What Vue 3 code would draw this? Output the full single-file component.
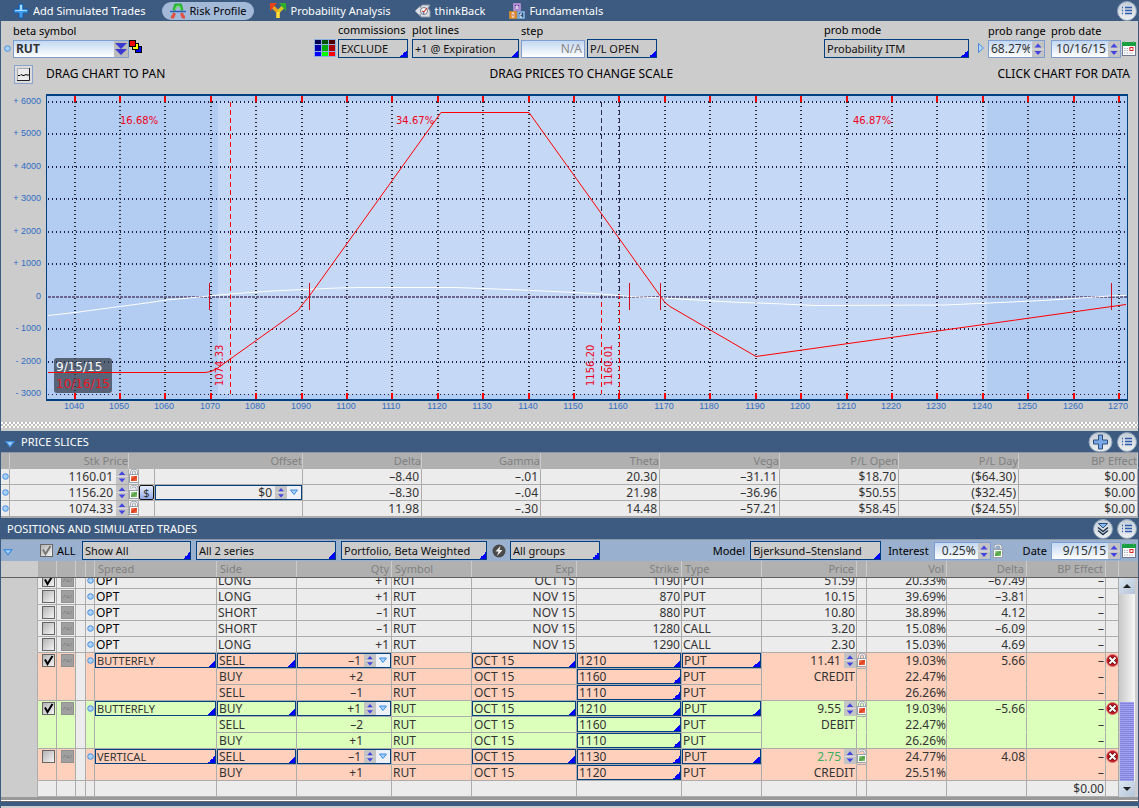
<script setup>
import { ref } from 'vue'

const tabs = [
  { icon: 'i-plus', label: 'Add Simulated Trades' },
  { icon: 'i-risk', label: 'Risk Profile', active: true },
  { icon: 'i-fork', label: 'Probability Analysis' },
  { icon: 'i-back', label: 'thinkBack' },
  { icon: 'i-abc', label: 'Fundamentals' }
]

const plotX = price => Math.floor(75 + (price - 1040) * 4.5412)
const plotY = value => Math.floor(297 - value * 0.0325)
const prices = Array.from({ length: 24 }, (_, i) => 1040 + i * 10)
const values = [6000, 5000, 4000, 3000, 2000, 1000, 0, -1000, -2000, -3000]
const valueLabel = v => (v > 0 ? '+ ' + v : v < 0 ? '- ' + -v : '0')
const breakEvens = [209, 309, 629, 660, 1111]
const zones = [
  { x: 120, text: '16.68%' },
  { x: 396, text: '34.67%' },
  { x: 853, text: '46.87%' }
]
const sliceMarks = [
  { x: 223, text: '1074.33' },
  { x: 594, text: '1156.20' },
  { x: 612, text: '1160.01' }
]

const sliceHeads = ['Delta', 'Gamma', 'Theta', 'Vega', 'P/L Open', 'P/L Day', 'BP Effect']
const slices = [
  { price: '1160.01', lock: 'i-lock', cells: ['–8.40', '–.01', '20.30', '–31.11', '$18.70', '($64.30)', '$0.00'] },
  { price: '1156.20', lock: 'i-unlock', offset: '$0', cells: ['–8.30', '–.04', '21.98', '–36.96', '$50.55', '($32.45)', '$0.00'] },
  { price: '1074.33', lock: 'i-lock', cells: ['11.98', '–.30', '14.48', '–57.21', '$58.45', '($24.55)', '$0.00'] }
]
const sliceCols = [9, 119, 10, 16, 148, 119, 119, 119, 120, 119, 120, 119]
const posCols = [37, 19, 19, 10, 9, 122, 80, 95, 80, 105, 105, 80, 95, 10, 80, 80, 79, 13]

const positions = ref([
  { on: true, side: 'LONG', qty: '+1', exp: 'OCT 15', strike: '1190', type: 'PUT', price: '51.59', vol: '20.33%', delta: '–67.49' },
  { on: false, side: 'LONG', qty: '+1', exp: 'NOV 15', strike: '870', type: 'PUT', price: '10.15', vol: '39.69%', delta: '–3.81' },
  { on: false, side: 'SHORT', qty: '–1', exp: 'NOV 15', strike: '880', type: 'PUT', price: '10.80', vol: '38.89%', delta: '4.12' },
  { on: false, side: 'SHORT', qty: '–1', exp: 'NOV 15', strike: '1280', type: 'CALL', price: '3.20', vol: '15.08%', delta: '–6.09' },
  { on: false, side: 'LONG', qty: '+1', exp: 'NOV 15', strike: '1290', type: 'CALL', price: '2.30', vol: '15.03%', delta: '4.69' }
])

const trades = ref([
  {
    on: true, tone: 'sell', spread: 'BUTTERFLY', price: '11.41', effect: 'CREDIT', lock: 'i-lock', delta: '5.66',
    legs: [
      { side: 'SELL', qty: '–1', strike: '1210', vol: '19.03%' },
      { side: 'BUY', qty: '+2', strike: '1160', vol: '22.47%' },
      { side: 'SELL', qty: '–1', strike: '1110', vol: '26.26%' }
    ]
  },
  {
    on: true, tone: 'buy', spread: 'BUTTERFLY', price: '9.55', effect: 'DEBIT', lock: 'i-lock', delta: '–5.66',
    legs: [
      { side: 'BUY', qty: '+1', strike: '1210', vol: '19.03%' },
      { side: 'SELL', qty: '–2', strike: '1160', vol: '22.47%' },
      { side: 'BUY', qty: '+1', strike: '1110', vol: '26.26%' }
    ]
  },
  {
    on: false, tone: 'sell', spread: 'VERTICAL', price: '2.75', live: true, effect: 'CREDIT', lock: 'i-unlock', delta: '4.08',
    legs: [
      { side: 'SELL', qty: '–1', strike: '1130', vol: '24.77%' },
      { side: 'BUY', qty: '+1', strike: '1120', vol: '25.51%' }
    ]
  }
])
</script>

<template>
  <div class="app">
    <svg class="sprites" aria-hidden="true">
      <defs>
        <linearGradient id="g-round" x1="0" y1="0" x2="0" y2="1">
          <stop offset="0" stop-color="#c3ccd6" /><stop offset="1" stop-color="#eef0f2" />
        </linearGradient>
        <linearGradient id="g-blue" x1="0" y1="0" x2="0" y2="1">
          <stop offset="0" stop-color="#8fd0ff" /><stop offset="1" stop-color="#2f8be0" />
        </linearGradient>
        <linearGradient id="g-red" x1="0" y1="0" x2="1" y2="1">
          <stop offset="0" stop-color="#f8a080" /><stop offset="0.5" stop-color="#e03a18" /><stop offset="1" stop-color="#f08060" />
        </linearGradient>
        <linearGradient id="g-green" x1="0" y1="0" x2="1" y2="1">
          <stop offset="0" stop-color="#b4dca8" /><stop offset="0.5" stop-color="#50a040" /><stop offset="1" stop-color="#90c880" />
        </linearGradient>
      </defs>
      <symbol id="i-plus" viewBox="0 0 16 16">
        <path d="M6 1h4v5h5v4h-5v5H6v-5H1V6h5z" fill="#3f9cec" stroke="#1c5ca8" />
        <path d="M7 2h2v5h5v1H9v0H2V7h5z" fill="#a4dcff" />
      </symbol>
      <symbol id="i-risk" viewBox="0 0 16 16">
        <path d="M4 7.500 5.500 2h5L12 7.500" fill="none" stroke="#27b431" stroke-width="3" stroke-linejoin="round" />
        <path d="M5 7 6.500 3h3L11 7" fill="none" stroke="#7be36c" stroke-width="1" />
        <path d="M1 14h2l1.500-4M15 14h-2l-1.500-4" fill="none" stroke="#e2503e" stroke-width="3" stroke-linejoin="round" />
        <path d="M0 8.500h16" stroke="#2a62b8" stroke-width="1.500" />
      </symbol>
      <symbol id="i-fork" viewBox="0 0 16 16">
        <path d="M8 15V9L3 4" fill="none" stroke="#f0a01c" stroke-width="3.500" />
        <path d="M8 9l5-5" fill="none" stroke="#d8c820" stroke-width="3.500" />
        <path d="M8 15V9" stroke="#ffe23c" stroke-width="3" />
        <path d="M0 0h7L0 8z" fill="#e8421c" />
        <path d="M16 0H9l7 8z" fill="#2cb02c" />
      </symbol>
      <symbol id="i-back" viewBox="0 0 16 16">
        <path d="M0 8l5-5v2l2-3h8l-2 3 2 3v6H6l-1-3v2z" fill="#dce0e6" stroke="#8c98a6" />
        <circle cx="9" cy="8" r="3.500" fill="#fff" stroke="#6b7684" />
        <path d="M7 8l2 1 3-4" fill="none" stroke="#d04030" stroke-width="1.200" />
        <path d="M8 9l1 2" stroke="#3a68b0" />
      </symbol>
      <symbol id="i-abc" viewBox="0 0 16 16">
        <g stroke-width="1.500">
          <rect x="5" y="1" width="6" height="6" fill="#5d2c93" stroke="#c9a0e8" />
          <rect x="1" y="9" width="6" height="6" fill="#b04008" stroke="#f09a20" />
          <rect x="9" y="9" width="6" height="6" fill="#28507c" stroke="#8cbce8" />
        </g>
        <path d="M7 6V3h2v3M7 5h2M3 14v-4h2v4zM13 11h-2v3h2" fill="none" stroke="#fff" />
      </symbol>
      <symbol id="i-round-list" viewBox="0 0 20 20">
        <circle cx="10" cy="10" r="9.500" fill="url(#g-round)" stroke="#8ea2ba" />
        <path d="M5 6.500h1M5 9.500h1M5 12.500h1M8 6.500h7M8 9.500h7M8 12.500h7" stroke="#2d5cb0" stroke-width="1.500" />
      </symbol>
      <symbol id="i-round-plus" viewBox="0 0 24 20">
        <rect x="0.500" y="0.500" width="23" height="19" rx="9.500" fill="url(#g-round)" stroke="#8ea2ba" />
        <path d="M10 3h4v5h5v4h-5v5h-4v-5H5V8h5z" fill="#7aa8e6" stroke="#2c5080" />
      </symbol>
      <symbol id="i-round-down" viewBox="0 0 20 20">
        <circle cx="10" cy="10" r="9.500" fill="url(#g-round)" stroke="#8ea2ba" />
        <path d="M5.500 4.500h9L10 9z" fill="#88b8f0" stroke="#28507c" />
        <path d="M5 8.500l5 4 5-4M5 11.500l5 4 5-4" fill="none" stroke="#1c3450" stroke-width="1.500" />
      </symbol>
      <symbol id="i-lock" viewBox="0 0 10 14">
        <path d="M2.500 7V3.500a2.500 2.500 0 0 1 5 0V7" fill="none" stroke="#8a94a0" stroke-width="2.600" />
        <path d="M2.500 7V3.500a2.500 2.500 0 0 1 5 0V7" fill="none" stroke="#f4f6f8" stroke-width="1.200" />
        <rect x="0.500" y="5.500" width="9" height="8" fill="#fff" stroke="#98a0aa" />
        <rect x="2" y="7" width="6" height="5" fill="url(#g-red)" />
      </symbol>
      <symbol id="i-unlock" viewBox="0 0 10 14">
        <path d="M2 3.500a3 2.500 0 0 1 6 0V6" fill="none" stroke="#8a94a0" stroke-width="2.400" />
        <path d="M2 3.500a3 2.500 0 0 1 6 0V6" fill="none" stroke="#f4f6f8" stroke-width="1.200" />
        <rect x="0.500" y="5.500" width="9" height="8" fill="#fff" stroke="#98a0aa" />
        <rect x="2" y="7" width="6" height="5" fill="url(#g-green)" />
      </symbol>
      <symbol id="i-spin" viewBox="0 0 12 16">
        <path d="M0 8h12" stroke="#dcdcdc" />
        <path d="M2.500 6.500 6 2.500l3.500 4z M2.500 10 6 14l3.500-4z" fill="#4444e0" />
      </symbol>
      <symbol id="i-tri" viewBox="0 0 8 6">
        <path d="M0.500 0.500h7L4 5z" fill="#a4d0fa" stroke="#3f8ce0" />
      </symbol>
      <symbol id="i-dot" viewBox="0 0 7 7">
        <circle cx="3.500" cy="3.500" r="2.800" fill="#a8d2fa" stroke="#4a8cdc" />
      </symbol>
      <symbol id="i-check" viewBox="0 0 13 13">
        <path d="M3 5.500l2.500 4.500L10.500 2" fill="none" stroke="currentColor" stroke-width="2" />
      </symbol>
      <symbol id="i-wave" viewBox="0 0 13 13">
        <rect x="0.500" y="0.500" width="12" height="12" fill="#a0a0a0" stroke="#909090" />
        <path d="M2 8l2-3 2 3 1-1V5M7 7l2 1 2-3" fill="none" stroke="#868686" />
      </symbol>
      <symbol id="i-cal" viewBox="0 0 14 15">
        <rect x="0.500" y="2.500" width="13" height="12" fill="#fff" stroke="#707890" />
        <path d="M0 1h14v4H0z" fill="#18a040" />
        <path d="M2.500 0v2M11.500 0v2" stroke="#60b878" />
        <path d="M2 7.500h6M2 9.500h5M2 12h9" stroke="#a8b0b8" stroke-dasharray="1.500 1" />
        <rect x="8" y="6.500" width="3" height="3" fill="none" stroke="#e02020" />
      </symbol>
      <symbol id="i-del" viewBox="0 0 13 13">
        <circle cx="6.500" cy="6.500" r="6" fill="#c01820" stroke="#e07070" />
        <path d="M3.500 3.500l6 6M9.500 3.500l-6 6" stroke="#501010" stroke-width="3.500" />
        <path d="M3.500 3.500l6 6M9.500 3.500l-6 6" stroke="#fff" stroke-width="2" />
      </symbol>
    </svg>

    <nav class="tabs">
      <button v-for="t in tabs" :key="t.label" type="button" class="tab" :class="{ active: t.active }">
        <svg class="ic16"><use :href="'#' + t.icon" /></svg>{{ t.label }}
      </button>
      <button type="button" class="round push" aria-label="Menu"><svg><use href="#i-round-list" /></svg></button>
    </nav>

    <section class="settings">
      <div class="fields">
        <svg class="dot"><use href="#i-dot" /></svg>
        <div class="field w-beta">
          <label for="beta">beta symbol</label>
          <span class="box grad">
            <input id="beta" class="strong" value="RUT">
            <button type="button" class="dbl" aria-label="Choose symbol">
              <svg viewBox="0 0 14 14"><path d="M1 1h12L7 7zM1 7h12l-6 6z" fill="#3a3ad0" /></svg>
            </button>
          </span>
        </div>
        <svg class="squares" viewBox="0 0 14 14" shape-rendering="crispEdges">
          <rect x="6.500" y="6.500" width="6" height="6" fill="#00f" stroke="#000" />
          <rect x="3.500" y="3.500" width="6" height="6" fill="#ff0" stroke="#000" />
          <rect x="0.500" y="0.500" width="6" height="6" fill="#f00" stroke="#000" />
        </svg>
        <svg class="palette" viewBox="0 0 22 18" shape-rendering="crispEdges">
          <rect width="22" height="18" fill="#8cb0e4" />
          <path d="M1 1h6v4H1z" fill="#000050" /><path d="M8 1h6v4H8z" fill="#005000" /><path d="M15 1h6v4h-6z" fill="#500000" />
          <path d="M1 6h6v6H1z" fill="#0000aa" /><path d="M8 6h6v6H8z" fill="#00aa00" /><path d="M15 6h6v6h-6z" fill="#aa0000" />
          <path d="M1 13h6v4H1z" fill="#00f" /><path d="M8 13h6v4H8z" fill="#0f0" /><path d="M15 13h6v4h-6z" fill="#f00" />
        </svg>
        <div class="field w-70">
          <label for="comm">commissions</label>
          <select id="comm" class="combo"><option>EXCLUDE</option></select>
        </div>
        <div class="field w-107">
          <label for="plot">plot lines</label>
          <select id="plot" class="combo"><option>+1 @ Expiration</option></select>
        </div>
        <div class="field w-64">
          <label for="step">step</label>
          <span class="box grad"><input id="step" class="right dim" value="N/A"></span>
        </div>
        <div class="field w-70">
          <select class="combo" aria-label="Plot value"><option>P/L OPEN</option></select>
        </div>
        <div class="field w-145 push">
          <label for="mode">prob mode</label>
          <select id="mode" class="combo"><option>Probability ITM</option></select>
        </div>
        <svg class="play" viewBox="0 0 8 12"><path d="M1.500 1.500v9L6.500 6z" fill="#b4d4fa" stroke="#4a8cdc" /></svg>
        <div class="field w-57">
          <label for="range">prob range</label>
          <span class="box grad"><input id="range" class="right" value="68.27%"><svg class="spin"><use href="#i-spin" /></svg></span>
        </div>
        <div class="field w-70">
          <label for="pdate">prob date</label>
          <span class="box grad"><input id="pdate" class="right" value="10/16/15"><svg class="spin"><use href="#i-spin" /></svg></span>
        </div>
        <svg class="cal"><use href="#i-cal" /></svg>
      </div>
      <div class="hints">
        <span class="hint">
          <svg class="chartico" viewBox="0 0 19 19">
            <rect x="0.500" y="0.500" width="18" height="18" fill="#dcdcdc" stroke="#88a4cc" />
            <path d="M3 3h12v12H3z" fill="#ececec" /><path d="M3.500 15V3.500H15" fill="none" stroke="#aaa" />
            <path d="M15.500 3v12.500H3" fill="none" stroke="#222" />
            <path d="M4 10.500h2l1-1 2 1h1l2-1 1 .5h2" fill="none" stroke="#000" />
          </svg>
          DRAG CHART TO PAN
        </span>
        <span>DRAG PRICES TO CHANGE SCALE</span>
        <span>CLICK CHART FOR DATA</span>
      </div>
    </section>

    <svg class="chart" viewBox="1 86 1137 336" role="img" aria-label="Risk profile chart">
      <g shape-rendering="crispEdges">
        <rect x="46" y="94" width="1082" height="307" fill="#004080" />
        <rect x="47" y="96" width="1080" height="303" fill="#b2ccf2" />
        <rect x="218" y="101" width="769" height="293" fill="#c5d8f5" />
        <path v-for="v in values" :key="v" :d="`M48 ${plotY(v)}H1127`" :class="v === 0 ? 'zero' : v === -3000 ? 'grid thin' : 'grid'" />
        <path v-for="p in prices" :key="p" :d="`M${plotX(p)} 102V394`" class="grid vert" />
        <path v-for="p in prices" :key="'t' + p" :d="`M${plotX(p)} 96v6M${plotX(p)} 393v6`" class="tick" />
        <path d="M230.500 102V394M601.500 302V394M619.500 294V394" class="slice" />
        <path d="M601.500 102V302M619.500 102V294" class="slice dark" />
      </g>
      <path class="now" d="M48 315.500 75 312.500 120 306.500 150 302.500 166 300 200 297 213 295.500 230 294 250 292.500 272 291 293 290 337 288 360 287.500 455 287.500 522 290 575 292.500 601 294 630 296.500 663 298 705 300.500 740 302.500 760 303 815 305.500 945 305 1000 302.500 1043 300.500 1080 298 1110 296 1126 295.500" />
      <path class="expiry" d="M48 372.500H205L211 371.500 217 368.500 298 310.500 302 305 309 296.500 441 112.500H529L661 297 665 302.500 670 306.500 756 356.500 1126 304.500" />
      <path v-for="b in breakEvens" :key="b" :d="`M${b + 0.5} 283V310`" class="even" />
      <rect x="54" y="358" width="58" height="35" rx="3" fill="#303844" fill-opacity="0.700" />
      <path d="M54 372.500h58" class="expiry" />
      <text x="56" y="371" class="legend">9/15/15</text>
      <text x="56" y="388" class="legend red">10/16/15</text>
      <text v-for="z in zones" :key="z.text" :x="z.x" y="124" class="mark">{{ z.text }}</text>
      <text v-for="s in sliceMarks" :key="s.text" class="mark" :transform="`translate(${s.x} 386) rotate(-90)`">{{ s.text }}</text>
      <text v-for="v in values" :key="'v' + v" x="41" :y="plotY(v) + 2" class="axis end">{{ valueLabel(v) }}</text>
      <text v-for="p in prices" :key="'p' + p" :x="plotX(p) - 1" y="409" class="axis mid">{{ p }}</text>
    </svg>
    <div class="splitter"></div>

    <header class="bar">
      <svg class="caret"><use href="#i-tri" /></svg>
      <h2>PRICE SLICES</h2>
      <button type="button" class="round wide push" aria-label="Add slice"><svg><use href="#i-round-plus" /></svg></button>
      <button type="button" class="round" aria-label="Menu"><svg><use href="#i-round-list" /></svg></button>
    </header>
    <table class="grid-table slices">
      <colgroup><col v-for="(w, i) in sliceCols" :key="i" :style="{ width: w + 'px' }"></colgroup>
      <thead>
        <tr>
          <th></th><th class="r">Stk Price</th><th colspan="3" class="r">Offset</th>
          <th v-for="h in sliceHeads" :key="h" class="r">{{ h }}</th>
        </tr>
      </thead>
      <tbody>
        <tr v-for="s in slices" :key="s.price">
          <td class="ctr"><svg class="dot"><use href="#i-dot" /></svg></td>
          <td><span class="spinbox"><input :value="s.price" aria-label="Stock price"><svg class="spin"><use href="#i-spin" /></svg></span></td>
          <td class="ctr"><svg class="lock"><use :href="'#' + s.lock" /></svg></td>
          <td class="ctr"><button v-if="s.offset" type="button" class="dollar">$</button></td>
          <td>
            <span v-if="s.offset" class="spinbox framed">
              <input :value="s.offset" aria-label="Offset"><svg class="spin"><use href="#i-spin" /></svg><svg class="drop"><use href="#i-tri" /></svg>
            </span>
          </td>
          <td v-for="(c, i) in s.cells" :key="i" class="r pad">{{ c }}</td>
        </tr>
      </tbody>
    </table>

    <header class="bar">
      <h2 class="flush">POSITIONS AND SIMULATED TRADES</h2>
      <button type="button" class="round push" aria-label="Expand"><svg><use href="#i-round-down" /></svg></button>
      <button type="button" class="round" aria-label="Menu"><svg><use href="#i-round-list" /></svg></button>
    </header>
    <div class="filters">
      <svg class="caret"><use href="#i-tri" /></svg>
      <label class="all"><span class="tick-wrap soft"><input type="checkbox" checked><svg><use href="#i-check" /></svg></span>ALL</label>
      <select class="combo w-109" aria-label="Show"><option>Show All</option></select>
      <select class="combo w-140" aria-label="Series"><option>All 2 series</option></select>
      <select class="combo w-146" aria-label="Weighting"><option>Portfolio, Beta Weighted</option></select>
      <svg class="bolt" viewBox="0 0 14 14"><circle cx="7" cy="7" r="6.500" fill="#4a4a4a" /><path d="M8.500 2 3.500 7.500h3L5 12l5.500-6h-3z" fill="#f0f0f0" /></svg>
      <select class="combo w-90" aria-label="Groups"><option>All groups</option></select>
      <label for="model" class="push">Model</label>
      <select id="model" class="combo w-131"><option>Bjerksund–Stensland</option></select>
      <label for="interest" class="lead">Interest</label>
      <span class="box grad w-57"><input id="interest" class="right" value="0.25%"><svg class="spin"><use href="#i-spin" /></svg></span>
      <svg class="lock"><use href="#i-unlock" /></svg>
      <label for="date" class="date">Date</label>
      <span class="box grad w-70"><input id="date" class="right" value="9/15/15"><svg class="spin"><use href="#i-spin" /></svg></span>
      <svg class="cal"><use href="#i-cal" /></svg>
    </div>

    <div class="positions">
      <div class="head-row">
        <table class="grid-table heads">
          <colgroup><col v-for="(w, i) in posCols" :key="i" :style="{ width: w + 'px' }"></colgroup>
          <thead>
            <tr>
              <th class="gutter"></th><th></th><th></th><th></th><th></th>
              <th>Spread</th><th>Side</th><th class="r">Qty</th><th>Symbol</th><th class="r">Exp</th><th class="r">Strike</th><th>Type</th>
              <th class="r">Price</th><th></th><th class="r">Vol</th><th class="r">Delta</th><th class="r">BP Effect</th><th></th>
            </tr>
          </thead>
        </table>
      </div>
      <div class="body-row">
        <div class="viewport">
          <table class="grid-table">
            <colgroup><col v-for="(w, i) in posCols" :key="i" :style="{ width: w + 'px' }"></colgroup>
            <tbody>
              <tr v-for="(p, i) in positions" :key="i">
                <td class="gutter"></td>
                <td class="ctr"><span class="tick-wrap"><input v-model="p.on" type="checkbox" aria-label="Include"><svg v-if="p.on"><use href="#i-check" /></svg></span></td>
                <td class="ctr"><svg class="wave"><use href="#i-wave" /></svg></td>
                <td></td>
                <td class="ctr"><svg class="dot"><use href="#i-dot" /></svg></td>
                <td class="ink">OPT</td><td>{{ p.side }}</td><td class="r pad">{{ p.qty }}</td><td>RUT</td>
                <td class="r">{{ p.exp }}</td><td class="r">{{ p.strike }}</td><td>{{ p.type }}</td>
                <td class="r">{{ p.price }}</td><td></td><td class="r flush">{{ p.vol }}</td><td class="r">{{ p.delta }}</td><td class="r">–</td><td></td>
              </tr>
            </tbody>
            <tbody v-for="(t, ti) in trades" :key="'t' + ti" :class="t.tone">
              <tr v-for="(l, li) in t.legs" :key="li" :class="{ open: li < t.legs.length - 1 }">
                <td class="gutter"></td>
                <template v-if="li === 0">
                  <td class="ctr" :rowspan="t.legs.length"><span class="tick-wrap"><input v-model="t.on" type="checkbox" aria-label="Include"><svg v-if="t.on"><use href="#i-check" /></svg></span></td>
                  <td class="ctr" :rowspan="t.legs.length"><svg class="wave"><use href="#i-wave" /></svg></td>
                  <td class="plain" :rowspan="t.legs.length"></td>
                  <td class="ctr" :rowspan="t.legs.length"><svg class="dot"><use href="#i-dot" /></svg></td>
                  <td :rowspan="t.legs.length"><select class="combo cell name" aria-label="Spread"><option>{{ t.spread }}</option></select></td>
                  <td><select class="combo cell" aria-label="Side"><option>{{ l.side }}</option></select></td>
                  <td>
                    <span class="spinbox framed">
                      <input :value="l.qty" aria-label="Quantity"><svg class="spin"><use href="#i-spin" /></svg><svg class="drop"><use href="#i-tri" /></svg>
                    </span>
                  </td>
                </template>
                <template v-else>
                  <td class="in">{{ l.side }}</td><td class="r legqty">{{ l.qty }}</td>
                </template>
                <td>RUT</td>
                <td v-if="li === 0"><select class="combo cell" aria-label="Expiration"><option>OCT 15</option></select></td>
                <td v-else class="in">OCT 15</td>
                <td><select class="combo cell" aria-label="Strike"><option>{{ l.strike }}</option></select></td>
                <td v-if="li === 0"><select class="combo cell" aria-label="Type"><option>PUT</option></select></td>
                <td v-else>PUT</td>
                <td v-if="li === 0" class="merge"><span class="spinbox"><input :class="{ live: t.live }" :value="t.price" aria-label="Price"><svg class="spin"><use href="#i-spin" /></svg></span></td>
                <td v-else class="r merge">{{ li === 1 ? t.effect : '' }}</td>
                <td class="ctr" :class="{ merge: li > 0 }"><svg v-if="li === 0" class="lock"><use :href="'#' + t.lock" /></svg></td>
                <td class="r flush merge">{{ l.vol }}</td>
                <td class="r merge">{{ li === 0 ? t.delta : '' }}</td>
                <td class="r merge">–</td>
                <td class="ctr merge"><button v-if="li === 0" type="button" class="del" aria-label="Remove trade"><svg><use href="#i-del" /></svg></button></td>
              </tr>
            </tbody>
            <tbody>
              <tr>
                <td class="gutter"></td><td v-for="n in 15" :key="n"></td><td class="r">$0.00</td><td></td>
              </tr>
            </tbody>
          </table>
        </div>
        <div class="scroll">
          <button type="button" aria-label="Scroll up"><svg viewBox="0 0 8 4"><path d="M0 4l4-4 4 4z" /></svg></button>
          <div class="track"><div class="thumb"></div></div>
          <button type="button" aria-label="Scroll down"><svg viewBox="0 0 8 4"><path d="M0 0l4 4 4-4z" /></svg></button>
        </div>
      </div>
    </div>
    <footer class="foot"></footer>
  </div>
</template>

<style>
body { background: #ccc; }
</style>

<style scoped>
.app {
  display: flex; flex-direction: column; height: 100vh; min-height: 700px; box-sizing: border-box;
  border: solid #3d5a80; border-width: 0 1px;
  background: #ccc; color: #000; font: 12px/16px "Noto Sans", "Open Sans", sans-serif;
}
.app *, .app *::before { box-sizing: border-box; }
svg { display: block; flex: none; }
.sprites { position: absolute; width: 0; height: 0; }
button { display: flex; align-items: center; padding: 0; border: 0; background: none; color: inherit; font: inherit; }
input, select { min-width: 0; margin: 0; padding: 0; border: 0; border-radius: 0; background: none; color: inherit; font: inherit; }
.push { margin-left: auto; }
.right { text-align: right; }

.tabs { display: flex; align-items: center; flex: none; height: 21px; padding: 0 1px 0 4px; gap: 8px; background: #3d5a80; color: #fff; font-size: 11px; }
.tab { height: 18px; padding: 0 8px; gap: 4px; border-radius: 9px; white-space: nowrap; }
.tab.active { background: #a3b9d8; color: #000; }
.ic16 { width: 16px; height: 16px; }
.round { width: 20px; height: 20px; flex: none; }
.round svg { width: 100%; height: 20px; }
.round.wide { width: 25px; }

.settings { flex: none; }
.fields { display: flex; align-items: flex-end; height: 37px; padding: 0 2px; }
.field { display: flex; flex-direction: column; justify-content: flex-end; white-space: nowrap; margin-right: 4px; }
.field label { height: 16px; font-size: 11px; line-height: 14px; }
.dot { width: 7px; height: 7px; }
.fields .dot { margin: 0 2px 6px 1px; }
.w-beta { width: 116px; margin-right: 0; }
.w-57 { width: 57px; } .w-64 { width: 64px; } .w-70 { width: 70px; } .w-90 { width: 90px; } .w-107 { width: 107px; }
.w-109 { width: 109px; } .w-131 { width: 131px; } .w-140 { width: 140px; } .w-145 { width: 145px; } .w-146 { width: 146px; }
.fields .w-64, .fields .w-107 { margin-right: 2px; }
.squares { width: 14px; height: 14px; margin-bottom: 4px; }
.palette { width: 22px; height: 18px; margin: 0 2px 1px 171px; }
.play { width: 8px; height: 12px; margin: 0 3px 4px 4px; }
.fields .w-57 { margin-right: 6px; }
.fields .w-70:last-of-type { margin-right: 1px; }
.cal { width: 14px; height: 15px; }
.fields .cal { margin-bottom: 2px; }
.box { display: flex; align-items: stretch; height: 18px; border: 1px solid #7f9fcf; }
.box input { flex: 1; width: 0; padding: 0 2px; color: #333; line-height: 16px; }
.grad { background: linear-gradient(#c3d8f2, #fff); }
.strong { font-weight: 700; }
.box .dim { color: #888; }
.dbl { width: 14px; justify-content: center; background: #bcbcbc; }
.dbl svg { width: 14px; height: 14px; }
.spin { width: 12px; height: auto; background: #c4c4c4; }
.combo {
  appearance: none; display: block; height: 19px; padding: 0 2px; border: 1px solid #004080; color: #111; font-size: 11px;
  background: #ccc linear-gradient(135deg, transparent 50%, #00f 50%) right bottom / 7px 7px no-repeat;
}
.field .combo { width: 100%; }
.hints { display: flex; align-items: center; justify-content: space-between; height: 28px; padding: 4px 8px 0 13px; }
.hint { display: flex; align-items: center; gap: 13px; }
.chartico { width: 19px; height: 19px; }

.chart { width: 100%; height: auto; }
.grid { stroke: #1c1c48; stroke-width: 2; stroke-dasharray: 1 3; }
.grid.thin { stroke-width: 1; }
.grid.vert { stroke: #302c34; }
.zero { stroke: #6a6690; stroke-width: 2; stroke-dasharray: 3 1; }
.tick { stroke: #f00; stroke-width: 2; }
.slice { stroke: #f00; stroke-dasharray: 5 3; }
.slice.dark { stroke: #302c50; }
.now { fill: none; stroke: #fff; }
.expiry { fill: none; stroke: #f00; }
.even { stroke: #d01020; }
.legend { fill: #fff; font: 12px "DejaVu Sans", sans-serif; }
.legend.red { fill: #e8141c; }
.mark { fill: #f00020; font: 10px "DejaVu Sans", sans-serif; }
.axis { fill: #2f6cc4; font: 9px "Liberation Sans", sans-serif; }
.end { text-anchor: end; }
.mid { text-anchor: middle; }
.splitter {
  flex: none; height: 9px; border-bottom: 3px solid #ccc;
  background:
    radial-gradient(circle at 1px 1px, #fff 1px, transparent 1px) 0 0 / 4px 4px,
    radial-gradient(circle at 1px 1px, #fff 1px, transparent 1px) 2px 2px / 4px 4px, #bebebe;
}

.bar { display: flex; align-items: center; flex: none; height: 22px; padding-right: 1px; gap: 4px; background: #3d5a80; border-bottom: 1px solid #8c98a8; color: #fff; }
.bar h2 { margin: 0; font-size: 11px; font-weight: 400; line-height: 20px; white-space: nowrap; padding-left: 2px; }
.bar h2.flush { padding-left: 6px; }
.caret { width: 10px; height: 7px; margin: 5px 0 0 4px; }

.grid-table { width: 100%; table-layout: fixed; border-collapse: separate; border-spacing: 0; }
th { height: 16px; padding: 0 3px; border-right: 1px solid #ccc; background: #b0b0b0; color: #808080; font-size: 11px; font-weight: 400; text-align: left; line-height: 16px; white-space: nowrap; }
td { height: 16px; padding: 0 1px; border: solid #acacac; border-width: 0 1px 1px 0; background: #ececec; color: #333; line-height: 15px; white-space: nowrap; vertical-align: top; overflow: hidden; }
.r { text-align: right; }
th.r { padding: 0; }
.heads th.r { padding-right: 2px; }
td.pad { padding-right: 2px; }
td.flush { padding-right: 0; }
td.ink { color: #000; }
td.in { padding-left: 2px; }
td.ctr { padding: 0; }
.ctr > svg, .ctr > button { margin: 0 auto; }
td.ctr .dot { margin: 4px 0 0 1px; }
.lock { width: 10px; height: 14px; }
.slices { border-bottom: 1px solid #acacac; flex: none; }
.spinbox { display: flex; height: 15px; align-items: stretch; }
.spinbox input { flex: 1; width: 0; text-align: right; padding-right: 3px; line-height: 15px; }
td:has(> .spinbox) { padding: 0; }
td:has(> select) { padding: 0; }
.framed { border: 1px solid #004080; }
.framed input { line-height: 13px; }
.drop { width: 14px; height: auto; padding: 3px; background: #eef2f8; }
.dollar { width: 15px; height: 15px; justify-content: center; border: 1px solid #111; border-radius: 2px; background: linear-gradient(#e8eeff, #90a8e8); font-size: 11px; line-height: 13px; }

.filters { display: flex; align-items: center; flex: none; height: 21px; padding-right: 2px; background: #9ab0cf; white-space: nowrap; color: #000; font-size: 11px; }
.filters .box { font-size: 12px; }
.filters .caret { margin: 4px 27px 0 2px; }
.all { display: flex; align-items: center; gap: 4px; width: 37px; margin-right: 5px; }
.filters .combo { margin-right: 5px; }
.filters .bolt { width: 14px; height: 14px; margin-right: 4px; }
.filters label.push { margin-right: 5px; margin-left: auto; }
.filters .lead { margin: 0 5px 0 2px; }
.filters .date { margin: 0 4px 0 20px; }
.filters .box + .lock { margin-left: 2px; }
.filters .box + .cal { margin-left: 1px; }
.tick-wrap { display: block; position: relative; width: 13px; height: 13px; color: #000; }
.tick-wrap.soft { color: #777; }
.tick-wrap input { appearance: none; display: block; width: 13px; height: 13px; border: 1px solid #666; background: linear-gradient(135deg, #b4b4b4, #f4f4f4); }
.tick-wrap svg { position: absolute; inset: 0; width: 13px; height: 13px; pointer-events: none; }
.wave { width: 13px; height: 13px; }
.ctr > .tick-wrap, .ctr > .wave { margin: 1px 0 0 4px; }

.positions { display: flex; flex-direction: column; flex: 1; min-height: 0; }
.head-row { flex: none; padding-right: 19px; background: #b0b0b0; border-bottom: 1px solid #606060; }
.gutter { background: #ccc; border-bottom-color: #ccc; }
.body-row { display: flex; flex: 1; min-height: 0; padding-right: 3px; }
.viewport { display: flex; flex-direction: column; justify-content: flex-end; flex: 1; overflow: hidden; }
.viewport .grid-table { flex: none; }
.sell td { background: #ffd0bc; }
.buy td { background: #dcffbc; }
tbody td.gutter { background: #ccc; }
tbody td.plain { background: #ececec; }
.open .merge { border-bottom-color: transparent; background-clip: border-box; }
.combo.cell { width: 100%; height: 15px; padding: 0 1px; background-color: transparent; font-size: 12px; line-height: 13px; color: #333; }
.combo.cell.name { font-size: 11px; }
.legqty { padding-right: 28px; }
.live { color: #3cb060; }
.del svg { width: 13px; height: 13px; }
.del { height: 15px; }
.scroll { display: flex; flex-direction: column; width: 16px; flex: none; }
.scroll button { justify-content: center; height: 16px; background: linear-gradient(135deg, #dde7f2, #b4c4d8); }
.scroll button svg { width: 8px; height: 4px; fill: #222; }
.track { display: flex; flex-direction: column; justify-content: flex-end; flex: 1; background: linear-gradient(90deg, #c8c8c8, #f6f6f6); }
.thumb { height: 42%; margin: 0 1px; background: repeating-linear-gradient(#a0a0f0 0 1px, #8484dc 1px 2px); }
.foot { flex: none; height: 11px; background: linear-gradient(#999 0 3px, #fff 3px 4px, #666 4px 5px, #3d5a80 5px 9px, #ccc 9px); }
</style>
